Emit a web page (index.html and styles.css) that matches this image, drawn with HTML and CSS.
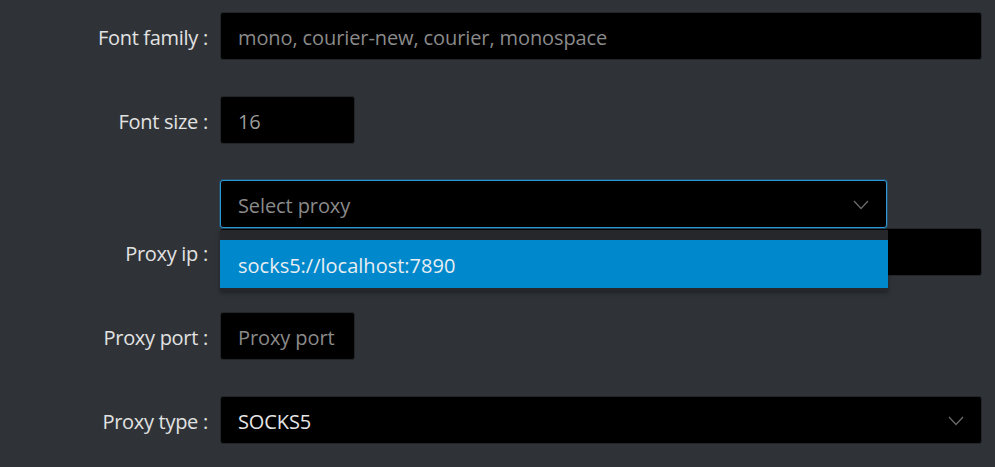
FILE: index.html
```html
<!DOCTYPE html>
<html>
<head>
<meta charset="utf-8">
<link rel="stylesheet" href="styles.css">
</head>
<body>
<div class="form">
  <div class="row">
    <label class="label">Font family</label>
    <div class="field wide"><span class="ph">mono, courier-new, courier, monospace</span></div>
  </div>
  <div class="row">
    <label class="label">Font size</label>
    <div class="field narrow"><span class="val dim">16</span></div>
  </div>
  <div class="row tight">
    <span class="label empty"></span>
    <div class="select-wrap">
      <div class="field select focused"><span class="ph">Select proxy</span>
        <svg class="chev" width="16" height="10" viewBox="0 0 16 10"><path d="M1 1 L8 8.5 L15 1" fill="none" stroke="#6a6a6a" stroke-width="1.3"/></svg>
      </div>
      <div class="menu">
        <div class="option active">socks5://localhost:7890</div>
      </div>
    </div>
  </div>
  <div class="row">
    <label class="label">Proxy ip</label>
    <div class="field wide"></div>
  </div>
  <div class="row">
    <label class="label">Proxy port</label>
    <div class="field narrow"><span class="ph">Proxy port</span></div>
  </div>
  <div class="row">
    <label class="label">Proxy type</label>
    <div class="field wide select"><span class="val">SOCKS5</span>
      <svg class="chev" width="16" height="10" viewBox="0 0 16 10"><path d="M1 1 L8 8.5 L15 1" fill="none" stroke="#6a6a6a" stroke-width="1.3"/></svg>
    </div>
  </div>
</div>
</body>
</html>
```
FILE: styles.css
```css
html, body {
  margin: 0;
  padding: 0;
  background: #2f3337;
}
body {
  font-family: "Open Sans", "Noto Sans", sans-serif;
  font-size: 20px;
  color: #e2e2e2;
}
.form {
  padding: 12px 13px 0 0;
  display: flex;
  flex-direction: column;
  gap: 36px;
}
.row {
  display: flex;
  align-items: center;
  gap: 12px;
}
.row.tight {
  margin-bottom: -36px;
  position: relative;
  z-index: 2;
}
.label {
  width: 208px;
  flex: none;
  text-align: right;
  letter-spacing: -0.3px;
  padding-top: 3px;
}
.label::after {
  content: ":";
  margin-left: 5px;
  margin-right: 0;
}
.label.empty::after {
  content: none;
}
.field {
  box-sizing: border-box;
  height: 48px;
  background: #000;
  border: 1px solid #232629;
  border-radius: 3px;
  display: flex;
  align-items: center;
  padding: 2px 16px 0 17px;
  white-space: nowrap;
  overflow: hidden;
  letter-spacing: -0.1px;
}
.wide { flex: 1; }
.narrow { width: 135px; }
.ph { color: #8a8a8a; }
.val { color: #e6e6e6; }
.val.dim { color: #9a9a9a; }
.select { justify-content: space-between; }
.chev { flex: none; margin-right: 1px; }
.select-wrap {
  position: relative;
  width: 667px;
  height: 48px;
}
.select-wrap .field { width: 667px; }
.focused {
  border-color: #2d97d7;
  box-shadow: 0 0 0 1px rgba(29,120,180,0.35);
}
.menu {
  position: absolute;
  left: 0;
  top: 50px;
  width: 668px;
  background: #25272b;
  padding: 10px 0 3px;
  box-shadow: 0 2px 4px rgba(0,0,0,0.35);
}
.option {
  height: 48px;
  display: flex;
  align-items: center;
  padding: 2px 0 0 18px;
  box-sizing: border-box;
  color: #e8eef2;
}
.option.active {
  background: #0088cc;
}
```
